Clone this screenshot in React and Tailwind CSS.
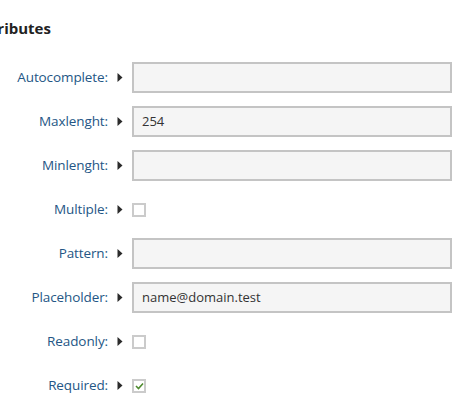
import React from "react";

const rows = [
  { label: "Autocomplete:", type: "text", value: "" },
  { label: "Maxlenght:", type: "text", value: "254" },
  { label: "Minlenght:", type: "text", value: "" },
  { label: "Multiple:", type: "check", checked: false },
  { label: "Pattern:", type: "text", value: "" },
  { label: "Placeholder:", type: "text", value: "name@domain.test" },
  { label: "Readonly:", type: "check", checked: false },
  { label: "Required:", type: "check", checked: true },
];

function Tri() {
  return (
    <svg width="6" height="9" viewBox="0 0 6 9" className="shrink-0">
      <path d="M0.5 0 L5.5 4.5 L0.5 9 Z" fill="#2b2b2b" />
    </svg>
  );
}

export default function App() {
  return (
    <div
      className="w-[464px] h-[407px] bg-white overflow-hidden"
      style={{ fontFamily: '"Open Sans", "Noto Sans", sans-serif' }}
    >
      <div className="h-[62px] flex items-center">
        <h2 className="ml-[-26px] text-[15px] font-bold text-[#222] leading-none mt-[-6px] whitespace-nowrap">
          Attributes
        </h2>
      </div>
      <div className="flex flex-col gap-[13px]">
        {rows.map((r) => (
          <div key={r.label} className="flex items-center h-[31px]">
            <div className="w-[108px] text-right text-[13.5px] text-[#245685] tracking-[-0.1px] whitespace-nowrap">
              {r.label}
            </div>
            <div className="ml-[9px] mr-[9px] flex items-center">
              <Tri />
            </div>
            {r.type === "text" ? (
              <div className="w-[320px] h-[31px] border-2 border-[#c4c4c4] bg-[#f5f5f5] flex items-center px-[8px] text-[13px] text-[#333]">
                {r.value}
              </div>
            ) : (
              <div className="w-[14px] h-[14px] border-2 border-[#cbcbcb] bg-white flex items-center justify-center">
                {r.checked && (
                  <svg width="9" height="8" viewBox="0 0 9 8">
                    <path d="M1 4 L3.5 6.5 L8 1.5" fill="none" stroke="#4e8a2e" strokeWidth="1.6" />
                  </svg>
                )}
              </div>
            )}
          </div>
        ))}
      </div>
    </div>
  );
}
